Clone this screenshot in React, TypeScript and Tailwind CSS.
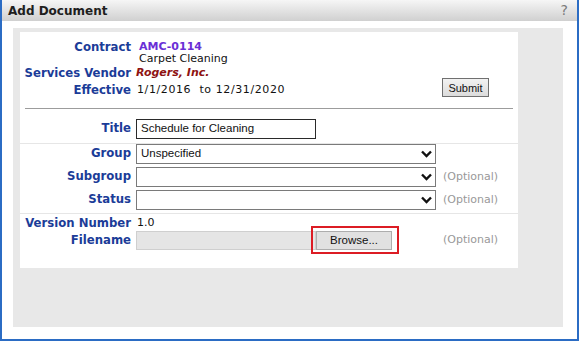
import React from 'react';

const labelCls = "w-[111px] shrink-0 text-right font-bold text-[11.7px] text-[#1b3c98]";

function Chevron() {
  return (
    <svg width="11" height="8" viewBox="0 0 11 8" className="shrink-0">
      <polyline points="1,1.5 5.5,6 10,1.5" fill="none" stroke="#111" strokeWidth="2.4" />
    </svg>
  );
}

function SelectBox({ value }: { value?: string }) {
  return (
    <div className="w-[300px] h-[20px] border border-[#7a7a7a] bg-white flex items-center justify-between pl-[4px] pr-[3px] font-['Liberation_Sans',Arial,sans-serif] text-[11.5px] text-[#111]">
      <span>{value}</span>
      <Chevron />
    </div>
  );
}

function Optional() {
  return <span className="ml-[7px] text-[#999]">(Optional)</span>;
}

export default function App() {
  return (
    <div className="w-[579px] h-[341px] bg-white border-2 border-t-0 border-[#2b6cc4] flex flex-col font-['DejaVu_Sans',Verdana,sans-serif] text-[11px] text-[#111]">
      {/* header */}
      <div className="h-[21px] shrink-0 bg-gradient-to-b from-[#f6f6f6] to-[#d0d0d0] flex items-center justify-between pl-[6px] pr-[9px]">
        <span className="text-[12px] font-bold text-[#1e1e1e]">Add Document</span>
        <span className="text-[14px] text-[#7a7a7a]">?</span>
      </div>

      <div className="flex-1 pl-[11px] pr-[14px] pt-[7px] pb-[12px] flex">
        <div className="flex-1 bg-[#e8e8e8] pl-[7px] pt-[4px]">
          <div className="w-[498px] bg-white pt-[9px] pb-[18px]">
            {/* contract info */}
            <div className="leading-[12px]">
              <div className="flex">
                <span className={labelCls}>Contract</span>
                <div className="pl-[8px]">
                  <div className="font-bold text-[#6a2fd6]">AMC-0114</div>
                  <div>Carpet Cleaning</div>
                </div>
              </div>
              <div className="flex mt-[2px]">
                <span className={labelCls}>Services Vendor</span>
                <span className="pl-[5px] font-bold italic text-[#8e1212]">Rogers, Inc.</span>
              </div>
              <div className="flex items-end h-[19px] -mt-[1px]">
                <span className={labelCls + " pb-[1px]"}>Effective</span>
                <span className="pl-[6px] pb-[1px] tracking-[0.6px]">1/1/2016&nbsp; to 12/31/2020</span>
                <button className="ml-auto mr-[29px] w-[47px] h-[19px] border border-[#707070] bg-gradient-to-b from-[#f2f2f2] to-[#dcdcdc] font-['Liberation_Sans',Arial,sans-serif] text-[11px] text-[#111]">
                  Submit
                </button>
              </div>
            </div>

            <div className="mx-[5px] mt-[11px] h-px bg-[#9c9c9c]" />

            {/* title */}
            <div className="flex items-center pt-[10px] pb-[4px] border-b border-[#e6e6e6]">
              <span className={labelCls}>Title</span>
              <div className="ml-[5px] w-[180px] h-[20px] border border-[#2a2a2a] flex items-center pl-[4px] font-['Liberation_Sans',Arial,sans-serif] text-[11.5px]">
                Schedule for Cleaning
              </div>
            </div>

            {/* selects */}
            <div className="flex flex-col gap-[3px] pb-[3px] border-b border-[#e6e6e6]">
              <div className="flex items-center">
                <span className={labelCls}>Group</span>
                <div className="ml-[5px]"><SelectBox value="Unspecified" /></div>
              </div>
              <div className="flex items-center">
                <span className={labelCls}>Subgroup</span>
                <div className="ml-[5px]"><SelectBox /></div>
                <Optional />
              </div>
              <div className="flex items-center">
                <span className={labelCls}>Status</span>
                <div className="ml-[5px]"><SelectBox /></div>
                <Optional />
              </div>
            </div>

            {/* version / file */}
            <div className="flex leading-[12px] pt-[3px]">
              <span className={labelCls}>Version Number</span>
              <span className="pl-[6px]">1.0</span>
            </div>
            <div className="flex items-center mt-[2px]">
              <span className={labelCls}>Filename</span>
              <div className="ml-[5px] w-[300px] flex">
                <div className="w-[180px] h-[19px] bg-[#e5e5e5] border border-[#cfcfcf]" />
                <div className="relative">
                  <button className="w-[76px] h-[19px] bg-[#e1e1e1] border border-[#adadad] font-['Liberation_Sans',Arial,sans-serif] text-[11.5px] text-[#111]">
                    Browse...
                  </button>
                  <div className="absolute -left-[5px] -right-[7px] -top-[5px] -bottom-[4px] border-2 border-[#dc1c24]" />
                </div>
              </div>
              <Optional />
            </div>
          </div>
        </div>
      </div>
    </div>
  );
}
